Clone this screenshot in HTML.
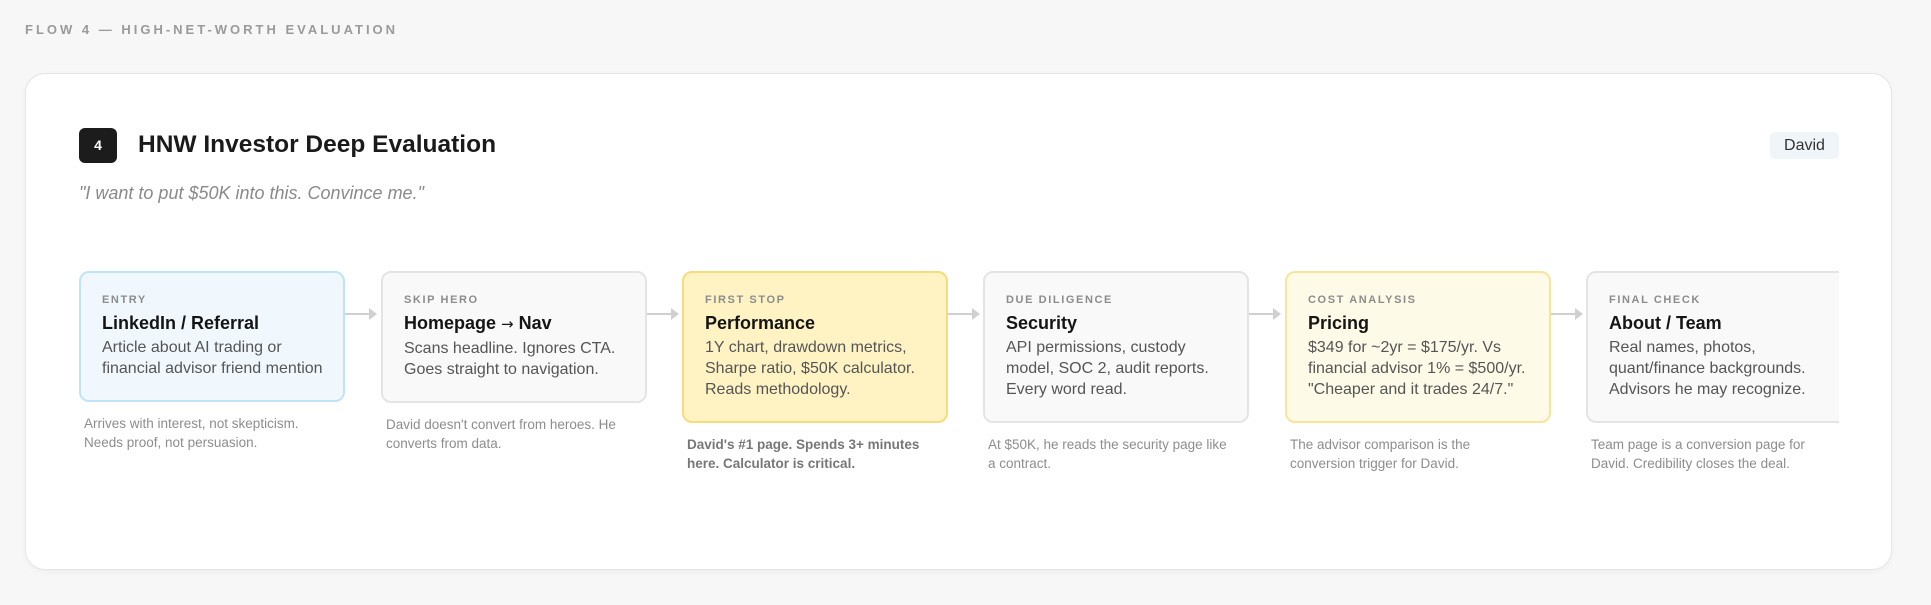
<!DOCTYPE html>
<html><head><meta charset="utf-8"><style>
*{box-sizing:border-box;margin:0;padding:0}
body{width:1931px;height:605px;background:#f7f7f7;font-family:"Liberation Sans",Arial,sans-serif;position:relative;overflow:hidden;color:#1a1a1a}
.h{position:absolute;left:25px;top:22px;font-size:13px;font-weight:700;letter-spacing:3px;color:#9a9a9a}
.card{position:absolute;left:25px;top:73px;width:1867px;height:497px;background:#fff;border:1px solid #e6e6e6;border-radius:20px;box-shadow:0 2px 6px rgba(0,0,0,.04)}
.badge{position:absolute;left:79px;top:128px;width:38px;height:35px;background:#1c1c1c;border-radius:6px;color:#fff;font-size:14px;font-weight:700;text-align:center;line-height:35px}
.title{position:absolute;left:138px;top:131px;font-size:24.5px;font-weight:700;color:#1a1a1a}
.quote{position:absolute;left:79px;top:183px;font-size:18px;font-style:italic;color:#8a8a8a}
.tag{position:absolute;left:1770px;top:132px;width:69px;height:27px;background:#f0f5f9;border-radius:5px;font-size:16px;color:#333;text-align:center;line-height:27px}
.flow{position:absolute;left:79px;top:271px;width:1760px;height:300px;overflow:hidden}
.col{position:absolute;top:0;width:266px}
.box{border:2px solid #e4e4e4;background:#f9f9f9;border-radius:10px;padding:20px 18px 21px 21px}
.lb{font-size:11px;font-weight:700;letter-spacing:1.6px;color:#8c8c8c;line-height:14px}
.tt{font-size:18px;font-weight:700;color:#151515;margin-top:4px;line-height:24px}
.ar{font-family:"DejaVu Sans",sans-serif;font-size:15px;font-weight:400}
.bd{font-size:16px;color:#555;line-height:21px;margin-top:2px}
.nt{font-size:13.5px;color:#8d8d8d;line-height:19px;margin-top:12px;padding-left:5px;padding-right:22px}
.nt.b{font-weight:700;color:#777;padding-right:26px}
.blue{background:#f0f8fe;border-color:#bfe3f7}
.y1{background:#fff3c4;border-color:#f5dc7c}
.y2{background:#fefae8;border-color:#f7e59a}
.arr{position:absolute;top:42px;height:2px;width:30px;background:#d0d0d0}
.arr:after{content:"";position:absolute;right:-2px;top:-5px;border-left:8px solid #d0d0d0;border-top:6px solid transparent;border-bottom:6px solid transparent}
</style></head><body>
<div class="h">FLOW 4 — HIGH-NET-WORTH EVALUATION</div>
<div class="card"></div>
<div class="badge">4</div>
<div class="title">HNW Investor Deep Evaluation</div>
<div class="quote">"I want to put $50K into this. Convince me."</div>
<div class="tag">David</div>
<div class="flow">
<div class="col" style="left:0"><div class="box blue"><div class="lb">ENTRY</div><div class="tt">LinkedIn / Referral</div><div class="bd">Article about AI trading or financial advisor friend mention</div></div><div class="nt">Arrives with interest, not skepticism. Needs proof, not persuasion.</div></div>
<div class="arr" style="left:266px"></div>
<div class="col" style="left:302px"><div class="box"><div class="lb">SKIP HERO</div><div class="tt">Homepage <span class="ar">→</span> Nav</div><div class="bd">Scans headline. Ignores CTA. Goes straight to navigation.</div></div><div class="nt">David doesn't convert from heroes. He converts from data.</div></div>
<div class="arr" style="left:568px"></div>
<div class="col" style="left:603px"><div class="box y1"><div class="lb">FIRST STOP</div><div class="tt">Performance</div><div class="bd">1Y chart, drawdown metrics, Sharpe ratio, $50K calculator. Reads methodology.</div></div><div class="nt b">David's #1 page. Spends 3+ minutes here. Calculator is critical.</div></div>
<div class="arr" style="left:869px"></div>
<div class="col" style="left:904px"><div class="box"><div class="lb">DUE DILIGENCE</div><div class="tt">Security</div><div class="bd">API permissions, custody model, SOC 2, audit reports. Every word read.</div></div><div class="nt">At $50K, he reads the security page like a contract.</div></div>
<div class="arr" style="left:1170px"></div>
<div class="col" style="left:1206px"><div class="box y2"><div class="lb">COST ANALYSIS</div><div class="tt">Pricing</div><div class="bd">$349 for ~2yr = $175/yr. Vs financial advisor 1% = $500/yr. "Cheaper and it trades 24/7."</div></div><div class="nt">The advisor comparison is the conversion trigger for David.</div></div>
<div class="arr" style="left:1472px"></div>
<div class="col" style="left:1507px"><div class="box"><div class="lb">FINAL CHECK</div><div class="tt">About / Team</div><div class="bd">Real names, photos, quant/finance backgrounds. Advisors he may recognize.</div></div><div class="nt">Team page is a conversion page for David. Credibility closes the deal.</div></div>
</div>
</body></html>
